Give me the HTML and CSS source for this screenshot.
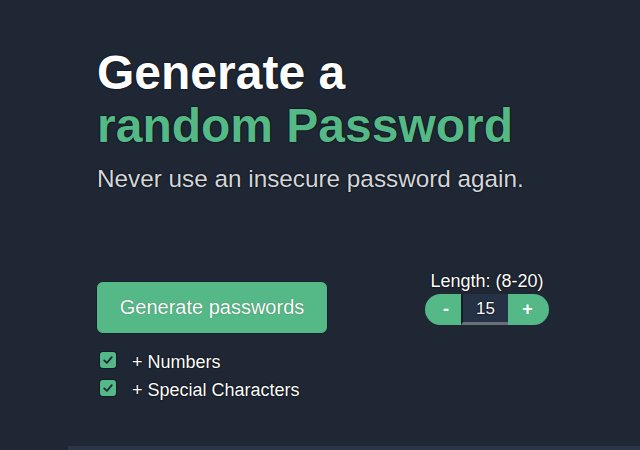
FILE: index.html
```html
<!DOCTYPE html>
<html lang="en">
<head>
<meta charset="utf-8">
<title>Password Generator</title>
<link rel="stylesheet" href="styles.css">
</head>
<body>
<main class="page">
  <header class="hero">
    <h1 class="title">Generate a<br><span class="accent">random Password</span></h1>
    <p class="subtitle">Never use an insecure password again.</p>
  </header>
  <section class="controls">
    <div class="left">
      <button class="generate">Generate passwords</button>
      <ul class="options">
        <li class="option">
          <span class="check"><svg viewBox="0 0 16 16" width="16" height="16"><path d="M4.2 8.3 L6.9 10.9 L11.8 5.2" fill="none" stroke="#1f2937" stroke-width="1.8" stroke-linecap="round" stroke-linejoin="round"/></svg></span>
          <span class="opt-label">+ Numbers</span>
        </li>
        <li class="option">
          <span class="check"><svg viewBox="0 0 16 16" width="16" height="16"><path d="M4.2 8.3 L6.9 10.9 L11.8 5.2" fill="none" stroke="#1f2937" stroke-width="1.8" stroke-linecap="round" stroke-linejoin="round"/></svg></span>
          <span class="opt-label">+ Special Characters</span>
        </li>
      </ul>
    </div>
    <div class="right">
      <div class="len-label">Length: (8-20)</div>
      <div class="stepper">
        <button class="step minus">-</button>
        <div class="value">15</div>
        <button class="step plus">+</button>
      </div>
    </div>
  </section>
  <div class="divider"></div>
</main>
</body>
</html>
```
FILE: styles.css
```css
* { box-sizing: border-box; }
html, body {
  margin: 0;
  padding: 0;
  background: #1f2734;
  height: 100%;
  overflow: hidden;
}
body {
  font-family: "Liberation Sans", Arial, sans-serif;
  color: #ffffff;
}
.page {
  padding-top: 46px;
}
.hero {
  padding-left: 97px;
}
.title {
  margin: 0;
  font-size: 48px;
  line-height: 53px;
  font-weight: 700;
  color: #ffffff;
  text-shadow: 0 0 1px #000, 0 0 2px rgba(0,0,0,0.7);
}
.accent {
  color: #55b987;
}
.subtitle {
  margin: 13px 0 0 0;
  font-size: 24.3px;
  line-height: 28px;
  color: #d4d6db;
  text-shadow: 0 0 1px #000, 0 0 2px rgba(0,0,0,0.7);
}
.controls {
  margin-top: 78px;
  margin-left: 96px;
  width: 453px;
  display: flex;
  justify-content: space-between;
  align-items: flex-start;
}
.left {
  padding-top: 10px;
  display: flex;
  flex-direction: column;
}
.generate {
  width: 232px;
  height: 53px;
  border: 1px solid #1a1f2b;
  border-radius: 7px;
  background: #55b987;
  color: #ffffff;
  font-family: "Liberation Sans", Arial, sans-serif;
  font-size: 20px;
  padding: 0;
  text-shadow: 0 0 1px rgba(0,0,0,0.5);
}
.options {
  list-style: none;
  margin: 18px 0 0 4px;
  padding: 0;
  display: flex;
  flex-direction: column;
  gap: 12px;
}
.option {
  display: flex;
  align-items: center;
  height: 16px;
}
.check {
  width: 16px;
  height: 16px;
  border-radius: 3px;
  background: #55b987;
  display: flex;
  box-shadow: 0 0 0 1px #151a24;
}
.opt-label {
  margin-left: 16px;
  font-size: 18px;
  line-height: 21px;
  position: relative;
  top: 2px;
  text-shadow: 0 0 1px #000, 0 0 2px rgba(0,0,0,0.8);
}
.right {
  display: flex;
  flex-direction: column;
  align-items: center;
  width: 124px;
}
.len-label {
  font-size: 18px;
  line-height: 21px;
  white-space: nowrap;
  text-shadow: 0 0 1px #000, 0 0 2px rgba(0,0,0,0.8);
}
.stepper {
  margin-top: 2px;
  display: flex;
  height: 31px;
  width: 124px;
}
.step {
  border: none;
  background: #55b987;
  color: #ffffff;
  font-family: "Liberation Sans", Arial, sans-serif;
  font-weight: 700;
  font-size: 18px;
  padding: 0;
  height: 31px;
}
.minus {
  width: 36px;
  border-radius: 16px 0 0 16px;
  padding-left: 6px;
}
.plus {
  width: 41px;
  border-radius: 0 16px 16px 0;
  padding-right: 2px;
}
.value {
  width: 47px;
  height: 31px;
  background: #253145;
  border-left: 2px solid #161c26;
  border-bottom: 3px solid #6b6f75;
  display: flex;
  align-items: center;
  justify-content: center;
  font-size: 17px;
  padding-top: 2px;
  text-shadow: 0 0 1px #000, 0 0 2px rgba(0,0,0,0.8);
}
.divider {
  margin-top: 50px;
  margin-left: 68px;
  height: 5px;
  background: #2a3647;
}
```
